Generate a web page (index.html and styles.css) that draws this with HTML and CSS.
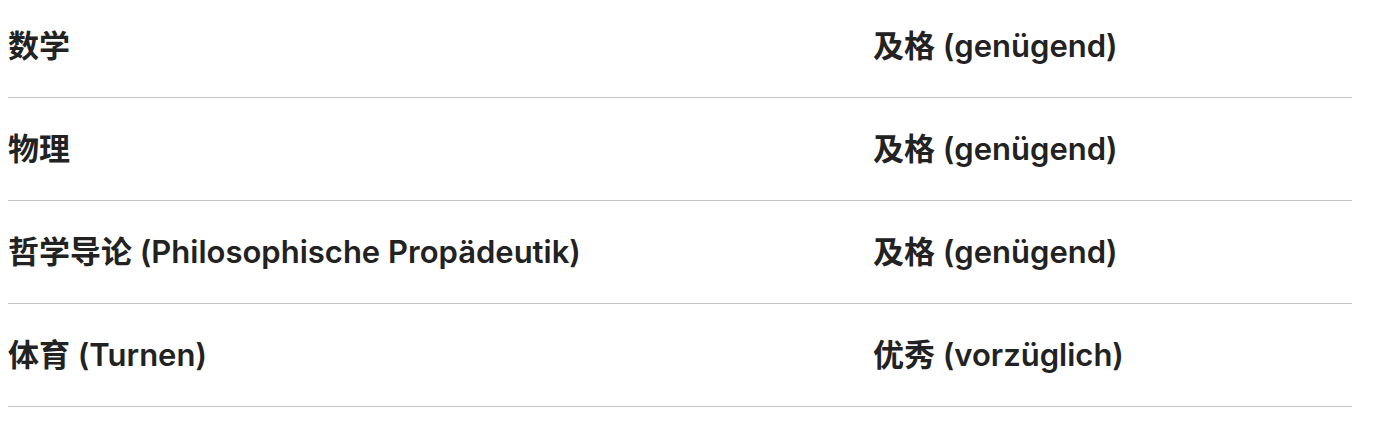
FILE: index.html
```html
<!DOCTYPE html>
<html lang="zh">
<head>
<meta charset="utf-8">
<link rel="stylesheet" href="styles.css">
</head>
<body>
<div class="grades">
  <div class="row"><div class="subject">数学</div><div class="grade">及格 (genügend)</div></div>
  <div class="row"><div class="subject">物理</div><div class="grade">及格 (genügend)</div></div>
  <div class="row"><div class="subject">哲学导论 (Philosophische Propädeutik)</div><div class="grade">及格 (genügend)</div></div>
  <div class="row"><div class="subject">体育 (Turnen)</div><div class="grade">优秀 (vorzüglich)</div></div>
</div>
</body>
</html>
```
FILE: styles.css
```css
html, body {
  margin: 0;
  padding: 0;
  background: #ffffff;
}
body {
  padding: 0 48px 0 8px;
  font-family: Inter, "Noto Sans CJK SC", sans-serif;
  color: #222222;
}
.grades {
  display: flex;
  flex-direction: column;
}
.row {
  display: grid;
  grid-template-columns: 865px 1fr;
  align-items: center;
  height: 102px;
  border-bottom: 1px solid #c4c4c4;
  font-size: 31px;
  font-weight: 600;
  line-height: 1.2;
}
.row:first-child {
  height: 91px;
  padding-bottom: 6px;
}
```
